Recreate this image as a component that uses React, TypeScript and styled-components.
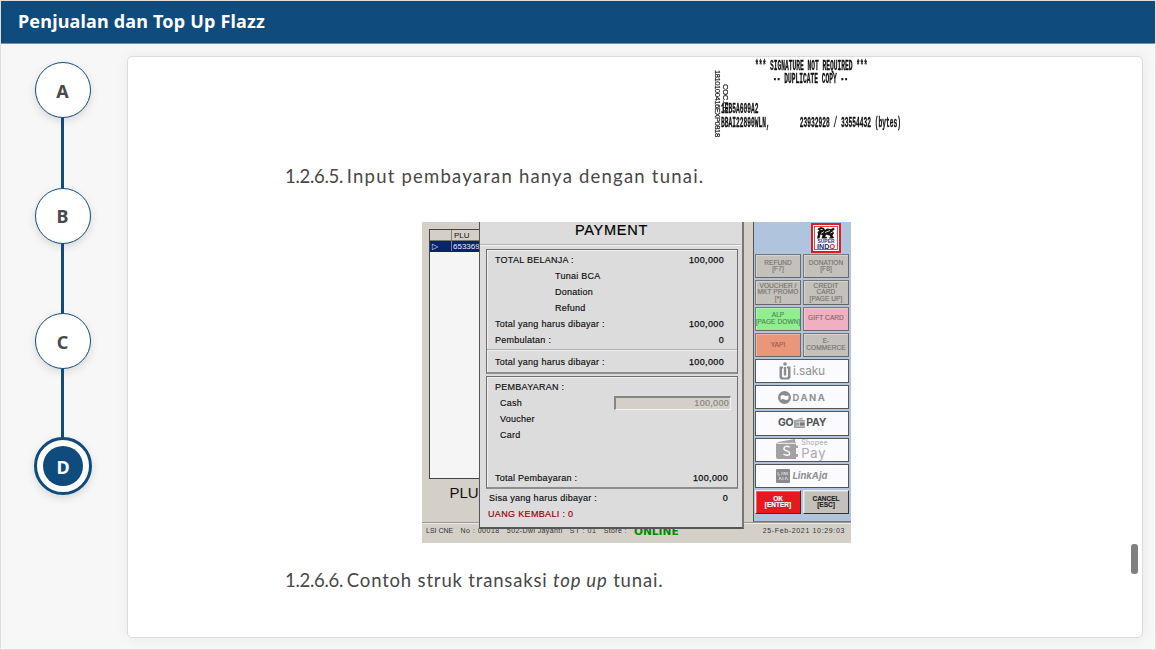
import React from "react";
import styled, { createGlobalStyle } from "styled-components";

const NAVY = "#104b7d";

const GlobalStyle = createGlobalStyle`
  * { box-sizing: border-box; }
  body { margin: 0; background: #f7f7f7; font-family: "Open Sans", "Noto Sans", sans-serif; }
`;

const Page = styled.div`
  width: 1156px;
  height: 650px;
  display: flex;
  flex-direction: column;
  overflow: hidden;
  background: #f7f7f7;
  border: 1px solid #dedede;
`;

const Header = styled.header`
  height: 43px;
  flex: none;
  padding: 0 17px 2px;
  display: flex;
  align-items: center;
  background: ${NAVY};
  border-bottom: 1px solid #6e93b3;
`;

const Title = styled.h1`
  margin: 0;
  color: #fff;
  font: 700 18px/24px "Noto Sans", "Open Sans", sans-serif;
  letter-spacing: 0.18px;
  white-space: nowrap;
`;

const Main = styled.main`
  flex: 1;
  display: flex;
`;

const Steps = styled.nav`
  width: 126px;
  flex: none;
  padding: 18px 0 0 33px;
  display: flex;
  flex-direction: column;
`;

const StepItem = styled.div`
  width: 57px;
  display: flex;
  flex-direction: column;
  align-items: center;
`;

const StepCircle = styled.div<{ $active?: boolean }>`
  width: ${(p) => (p.$active ? 58 : 56)}px;
  height: ${(p) => (p.$active ? 58 : 56)}px;
  margin: ${(p) => (p.$active ? "-2px -1px 0 0" : "0")};
  flex: none;
  border-radius: 50%;
  display: flex;
  align-items: center;
  justify-content: center;
  border: ${(p) => (p.$active ? 3 : 1.5)}px solid ${NAVY};
  background: #fff;
  box-shadow: 0 3px 8px rgba(0, 0, 0, 0.13);
`;

const StepLetter = styled.span<{ $active?: boolean }>`
  width: ${(p) => (p.$active ? 40 : 41)}px;
  height: ${(p) => (p.$active ? 40 : 41)}px;
  border-radius: 50%;
  text-align: center;
  font: 700 18px/42px "Noto Sans", sans-serif;
  color: ${(p) => (p.$active ? "#fff" : "#4a4a4a")};
  background: ${(p) => (p.$active ? NAVY : "transparent")};
`;

const StepLine = styled.div`
  width: 3.6px;
  height: 69.5px;
  background: ${NAVY};
`;

const Card = styled.section`
  width: 1016px;
  height: 582px;
  margin-top: 12px;
  display: flex;
  border: 1px solid #dcdcdc;
  border-radius: 5px;
  background: #fff;
  box-shadow: 0 0 14px rgba(0, 0, 0, 0.06);
  overflow: hidden;
`;

const Article = styled.article`
  flex: 1;
  padding-left: 157px;
`;

const ScrollTrack = styled.div`
  width: 13px;
  padding-top: 487px;
`;

const ScrollThumb = styled.div`
  width: 7px;
  height: 30px;
  margin-left: 2px;
  border-radius: 3px;
  background: #808080;
`;

const Paragraph = styled.p<{ $top: number; $gap: number }>`
  margin: ${(p) => p.$top}px 0 0;
  font: 400 18.5px/28px Lato, "Open Sans", sans-serif;
  letter-spacing: ${(p) => p.$gap}px;
  color: #484848;
  white-space: nowrap;
`;

const Numbering = styled.span`
  letter-spacing: -0.3px;
  word-spacing: -0.6px;
`;

const Receipt = styled.div`
  position: relative;
  width: 190px;
  height: 84px;
  margin-left: 428px;
  padding-top: 3px;
  filter: blur(0.25px);
`;

const ReceiptLine = styled.div<{ $x: number; $h: number }>`
  height: ${(p) => p.$h}px;
  padding-left: ${(p) => p.$x}px;
  white-space: pre;
  font: 700 14px/13px "Liberation Mono", monospace;
  color: #111;
  -webkit-text-stroke: 0.3px #111;
  span { display: inline-block; transform: scaleX(0.4462); transform-origin: 0 50%; }
`;

const ReceiptSerial = styled.div<{ $x: number; $y: number; $gap: number }>`
  position: absolute;
  left: ${(p) => p.$x}px;
  top: ${(p) => p.$y}px;
  writing-mode: vertical-rl;
  font: 400 7.6px/9px "Liberation Sans", sans-serif;
  letter-spacing: ${(p) => p.$gap}px;
  color: #111;
  -webkit-text-stroke: 0.2px #111;
`;

const Pos = styled.div`
  position: relative;
  width: 429px;
  height: 321px;
  margin: 32px 0 0 137px;
  display: flex;
  flex-direction: column;
  background: #d4d0c8;
  font-family: "Liberation Sans", Arial, sans-serif;
  overflow: hidden;
`;

const PosBody = styled.div`
  height: 300px;
  display: flex;
  justify-content: space-between;
`;

const Sales = styled.div`
  width: 120px;
  padding: 7px 0 0 7px;
`;

const Table = styled.div`
  height: 250px;
  border: 1px solid #444;
  background: #f5f5f5;
`;

const TableRow = styled.div<{ $selected?: boolean }>`
  height: 11px;
  display: flex;
  font-size: 8px;
  line-height: 12px;
  background: ${(p) => (p.$selected ? "#0a246a" : "#d4d0c8")};
  color: ${(p) => (p.$selected ? "#e8ecf8" : "#111")};
  border-bottom: 1px solid ${(p) => (p.$selected ? "#0a246a" : "#777")};
`;

const TableCell = styled.div<{ $w: number; $pad?: number }>`
  width: ${(p) => p.$w}px;
  padding-left: ${(p) => p.$pad ?? 2}px;
  border-right: 1px solid #808080;
`;

const PluLabel = styled.div`
  padding: 5px 0 0 20.5px;
  font-size: 15px;
  line-height: 18px;
  color: #111;
`;

const Side = styled.aside`
  width: 98px;
  padding: 1px 2px 0 1px;
  background: #b0c4de;
  border-left: 1px solid #555;
  border-bottom: 1px solid #777;
`;

const LogoRow = styled.div`
  height: 31px;
  padding-left: 56px;
`;

const KeyGrid = styled.div`
  display: grid;
  grid-template-columns: 46px 46px;
  grid-auto-rows: 24.25px;
  gap: 2px;
`;

const Key = styled.div<{ $bg?: string; $fg?: string; $strong?: boolean }>`
  display: flex;
  flex-direction: column;
  align-items: center;
  justify-content: center;
  white-space: nowrap;
  border: 1px solid;
  border-color: ${(p) => (p.$strong ? "#eee #333 #333 #eee" : "#777 #6a6a6a #666 #777")};
  box-shadow: inset 1px 1px 0 rgba(255, 255, 255, 0.3);
  background: ${(p) => p.$bg ?? "#c3c1ba"};
  color: ${(p) => p.$fg ?? "#77756f"};
  font-size: 6.5px;
  font-weight: ${(p) => (p.$strong ? 700 : 400)};
  line-height: 6.5px;
  letter-spacing: ${(p) => (p.$strong ? 0 : 0.1)}px;
  -webkit-text-stroke: 0.15px currentColor;
`;

const Wallets = styled.div`
  display: flex;
  flex-direction: column;
  gap: 2px;
  padding: 2px 0;
`;

const Wallet = styled.div<{ $gap?: number }>`
  height: 24.2px;
  display: flex;
  align-items: center;
  justify-content: center;
  gap: ${(p) => p.$gap ?? 2}px;
  border: 1px solid #555;
  background: #fafaff;
  color: #909090;
`;

const Brand = styled.span<{ $size: number; $bold?: boolean; $italic?: boolean; $gap?: number; $color?: string }>`
  font-family: Inter, "Liberation Sans", sans-serif;
  font-size: ${(p) => p.$size}px;
  line-height: 1;
  font-weight: ${(p) => (p.$bold ? 700 : 400)};
  font-style: ${(p) => (p.$italic ? "italic" : "normal")};
  letter-spacing: ${(p) => p.$gap ?? 0}px;
  color: ${(p) => p.$color ?? "#929292"};
`;

const Stacked = styled.div`
  display: flex;
  flex-direction: column;
  gap: 1px;
`;

const Status = styled.footer`
  height: 21px;
  padding: 0 6px 0 4px;
  display: flex;
  align-items: flex-start;
  gap: 7.2px;
  border-top: 1px solid #9a9892;
  box-shadow: inset 0 1px 0 #eceae6;
  font-size: 7px;
  line-height: 15px;
  color: #333;
  white-space: nowrap;
`;

const StatusItem = styled.span<{ $gap?: number }>`
  letter-spacing: ${(p) => p.$gap ?? 0}px;
`;

const StatusClock = styled(StatusItem)`
  margin-left: auto;
`;

const Online = styled.span`
  font: 700 10.6px/16px "DejaVu Sans", sans-serif;
  color: #008a00;
`;

const Modal = styled.div`
  position: absolute;
  left: 57px;
  top: 0;
  width: 265px;
  height: 307px;
  padding: 0 4px 0 6px;
  display: flex;
  flex-direction: column;
  background: #dcdcdc;
  border: solid #555;
  border-width: 0 2px 2px 1px;
  border-right-color: #777;
`;

const ModalTitle = styled.div`
  height: 23px;
  margin: 0 -3px 4px -6px;
  border-bottom: 1px solid #b4b4b4;
  box-shadow: 0 1px 0 #f2f2f2;
  text-align: center;
  font-size: 14.5px;
  line-height: 17px;
  letter-spacing: 0.75px;
  text-indent: 2px;
  color: #000;
  -webkit-text-stroke: 0.2px #000;
`;

const Group = styled.div<{ $h: number; $after?: number }>`
  height: ${(p) => p.$h}px;
  margin-bottom: ${(p) => p.$after ?? 2}px;
  padding-top: 2px;
  border: 1px solid #6d6d6d;
  border-bottom: 2px solid #8d8d8d;
  box-shadow: inset 1px 1px 0 #f0f0f0;
`;

const Line = styled.div<{ $left?: number; $right?: number; $h?: number; $gap?: number; $color?: string }>`
  height: ${(p) => p.$h ?? 16}px;
  padding: 0 ${(p) => p.$right ?? 13}px 0 ${(p) => p.$left ?? 8}px;
  display: flex;
  align-items: center;
  justify-content: space-between;
  white-space: nowrap;
  font-size: 9px;
  letter-spacing: ${(p) => p.$gap ?? 0.26}px;
  color: ${(p) => p.$color ?? "#0c0c0c"};
  -webkit-text-stroke: 0.15px currentColor;
`;

const Amount = styled.span`
  font-size: 9px;
  letter-spacing: 0.35px;
  -webkit-text-stroke: 0.25px currentColor;
`;

const Rule = styled.div`
  height: 2px;
  margin-top: 1px;
  border-top: 1px solid #b0b0b0;
  border-bottom: 1px solid #f2f2f2;
`;

const CashField = styled.div`
  width: 117px;
  height: 14px;
  padding-right: 1px;
  text-align: right;
  font-size: 9px;
  line-height: 11px;
  letter-spacing: 0.3px;
  color: #85837d;
  background: #d4d0c8;
  border: solid;
  border-width: 2px 1px 1px 2px;
  border-color: #858585 #f2f2f2 #f2f2f2 #858585;
`;

const Spacer = styled.div`
  height: 27px;
`;

const SuperIndoLogo = () => (
  <svg width="30" height="30" viewBox="0 0 30 30">
    <rect width="30" height="30" fill="#e01b22" />
    <rect x="2" y="2" width="26" height="26" fill="#fff" />
    <rect x="3.5" y="3.5" width="23" height="23" fill="none" stroke="#e01b22" strokeWidth="0.8" />
    <path d="M7 5.500L10 4l3 1 1 2 2-1.500 4 .5 3-1.500 .5 2-2 1.500 1.500 2-1.500 2.500 1.500 2-1 1h-4l1.500-2.500-4-1.500-1.500 2 2.500 1-1 1h-5l1-3.500-2-.5-1 4H6l1-4.500-.5-2 2-1.500-2-1z" fill="#151515" />
    <path d="M9.500 6.500h2M14 9.500l5-2M10 10.500l3-2M19.500 10l2-1" stroke="#fff" strokeWidth="0.8" />
    <text x="6.500" y="19.700" textLength="17" lengthAdjust="spacingAndGlyphs" fontSize="4.500" fontWeight="700" fill="#1b2d80">SUPER</text>
    <text x="6" y="26" textLength="18" lengthAdjust="spacingAndGlyphs" fontSize="7.500" fontWeight="700" fill="#1b2d80">IND<tspan fill="#e01b22">O</tspan></text>
  </svg>
);

const ISakuIcon = () => (
  <svg width="12" height="18" viewBox="0 0 12 18">
    <circle cx="6" cy="2" r="1.8" fill="#8d8d8d" />
    <path d="M.5 4.500H4V6.500H3V14Q3 15.500 4.500 15.500H7.500Q9 15.500 9 14V6.500H8V4.500H11.500V14.500Q11.500 17.500 8.500 17.500H3.500Q.5 17.500 .5 14.500V4.500z" fill="#8d8d8d" />
    <rect x="4.800" y="5" width="2.400" height="8.500" fill="#8d8d8d" />
  </svg>
);

const DanaIcon = () => (
  <svg width="13" height="13" viewBox="0 0 13 13">
    <circle cx="6.500" cy="6.500" r="6.500" fill="#8c8c8c" />
    <path d="M2.600 5q2-1.500 3.900-.5t3.900-.3v3.800q-2 1.500-3.900.5T2.600 8.800z" fill="#fff" />
  </svg>
);

const GoIcon = () => (
  <svg width="11" height="13" viewBox="0 0 11 13">
    <path d="M0 3h11v8H0zM2 2.500L8 .5l1 2z" fill="#a0a0a0" />
    <path d="M1.500 5h4M1.500 9h4" stroke="#e5e5e5" strokeWidth="0.7" />
    <rect x="5.500" y="5" width="5.500" height="4" fill="#777" stroke="#e8e8e8" strokeWidth="0.700" />
  </svg>
);

const ShopeeIcon = () => (
  <svg width="23" height="21" viewBox="0 0 23 21">
    <path d="M2 3L19 0v3h1V20H2Q0 20 0 18V5z" fill="#a2a2a2" />
    <path d="M1 4.300h19" stroke="#fff" strokeWidth="0.900" />
    <path d="M20 6.500h2v2.500h-2zM20 15h2v3h-2z" fill="#a2a2a2" />
    <path d="M13.600 8.300C11.500 6.700 7.900 7 7.900 9.400c0 2.900 5.800 2 5.800 4.800 0 2.500-3.900 2.800-6.200.8" fill="none" stroke="#fff" strokeWidth="1.400" />
  </svg>
);

const LinkAjaIcon = () => (
  <svg width="14" height="14" viewBox="0 0 14 14">
    <rect width="14" height="14" rx="1" fill="#8b8b8b" />
    <path d="M2 3v3h2M6 3v3M8 6V3l2 3V3M12 3l-1 1.500L12 6M3 11l1-3 1.500 3M7 8v3M9 11l1-3 2 3" fill="none" stroke="#ddd" strokeWidth="0.800" />
  </svg>
);

const steps = ["A", "B", "C", "D"];

const keys = [
  { lines: ["REFUND", "[F7]"] },
  { lines: ["DONATION", "[F8]"] },
  { lines: ["VOUCHER /", "MKT PROMO", "[*]"] },
  { lines: ["CREDIT", "CARD", "[PAGE UP]"] },
  { lines: ["ALP", "[PAGE DOWN]"], bg: "#90ee90", fg: "#4f8d50" },
  { lines: ["GIFT CARD"], bg: "#efb0bf", fg: "#8d6570" },
  { lines: ["YAPI"], bg: "#e9967a", fg: "#9b5d49" },
  { lines: ["E-", "COMMERCE"] },
];

export default function App() {
  return (
    <>
      <GlobalStyle />
      <Page>
        <Header>
          <Title>Penjualan dan Top Up Flazz</Title>
        </Header>
        <Main>
          <Steps>
            {steps.map((s) => (
              <StepItem key={s}>
                <StepCircle $active={s === "D"}>
                  <StepLetter $active={s === "D"}>{s}</StepLetter>
                </StepCircle>
                {s !== "D" && <StepLine />}
              </StepItem>
            ))}
          </Steps>
          <Card>
            <Article>
              <Receipt>
                <ReceiptLine $x={42} $h={13}><span>*** SIGNATURE NOT REQUIRED ***</span></ReceiptLine>
                <ReceiptLine $x={60} $h={30}><span>-- DUPLICATE COPY --</span></ReceiptLine>
                <ReceiptLine $x={8} $h={14}><span>1EB5A609A2</span></ReceiptLine>
                <ReceiptLine $x={8} $h={14}><span>BBAI22890WLN,        23932928 / 33554432 (bytes)</span></ReceiptLine>
                <ReceiptSerial $x={0} $y={13} $gap={-0.45}>1810100416EXP0818</ReceiptSerial>
                <ReceiptSerial $x={8} $y={27} $gap={-0.3}>COC.EB</ReceiptSerial>
              </Receipt>
              <Paragraph $top={21} $gap={1.21}><Numbering>1.2.6.5. </Numbering>Input pembayaran hanya dengan tunai.</Paragraph>
              <Pos>
                <PosBody>
                  <Sales>
                    <Table>
                      <TableRow>
                        <TableCell $w={22} />
                        <TableCell $w={60}>PLU</TableCell>
                      </TableRow>
                      <TableRow $selected>
                        <TableCell $w={22}>▷</TableCell>
                        <TableCell $w={60} $pad={1}>653369</TableCell>
                      </TableRow>
                    </Table>
                    <PluLabel>PLU</PluLabel>
                  </Sales>
                  <Side>
                    <LogoRow><SuperIndoLogo /></LogoRow>
                    <KeyGrid>
                      {keys.map((k) => (
                        <Key key={k.lines[0]} $bg={k.bg} $fg={k.fg}>
                          {k.lines.map((l) => <span key={l}>{l}</span>)}
                        </Key>
                      ))}
                    </KeyGrid>
                    <Wallets>
                      <Wallet><ISakuIcon /><Brand $size={12} $gap={-0.2}>i.saku</Brand></Wallet>
                      <Wallet><DanaIcon /><Brand $size={9.5} $bold $gap={1.5}>DANA</Brand></Wallet>
                      <Wallet $gap={1}>
                        <Brand $size={10.5} $bold $gap={-0.3} $color="#555">GO</Brand>
                        <GoIcon />
                        <Brand $size={10.5} $bold $gap={-0.3} $color="#555">PAY</Brand>
                      </Wallet>
                      <Wallet>
                        <ShopeeIcon />
                        <Stacked>
                          <Brand $size={7} $gap={0.2} $color="#aaa">Shopee</Brand>
                          <Brand $size={13} $gap={0.8} $color="#aaa">Pay</Brand>
                        </Stacked>
                      </Wallet>
                      <Wallet><LinkAjaIcon /><Brand $size={9.5} $bold $italic>LinkAja</Brand></Wallet>
                    </Wallets>
                    <KeyGrid>
                      <Key $bg="#e8191c" $fg="#fff" $strong><span>OK</span><span>[ENTER]</span></Key>
                      <Key $fg="#222" $strong><span>CANCEL</span><span>[ESC]</span></Key>
                    </KeyGrid>
                  </Side>
                </PosBody>
                <Status>
                  <StatusItem>LSI CNE</StatusItem>
                  <StatusItem $gap={0.5}>No : 00018</StatusItem>
                  <StatusItem $gap={0.4}>502-Dwi Jayanti</StatusItem>
                  <StatusItem $gap={0.6}>ST : 01</StatusItem>
                  <StatusItem $gap={0.35}>Store :</StatusItem>
                  <Online>ONLINE</Online>
                  <StatusClock $gap={0.65}>25-Feb-2021 10:29:03</StatusClock>
                </Status>
                <Modal>
                  <ModalTitle>PAYMENT</ModalTitle>
                  <Group $h={125}>
                    <Line>TOTAL BELANJA :<Amount>100,000</Amount></Line>
                    <Line $left={68}>Tunai BCA</Line>
                    <Line $left={68}>Donation</Line>
                    <Line $left={68}>Refund</Line>
                    <Line>Total yang harus dibayar :<Amount>100,000</Amount></Line>
                    <Line>Pembulatan :<Amount>0</Amount></Line>
                    <Rule />
                    <Line $h={22}>Total yang harus dibayar :<Amount>100,000</Amount></Line>
                  </Group>
                  <Group $h={113} $after={1}>
                    <Line>PEMBAYARAN :</Line>
                    <Line $left={13} $right={6}>Cash<CashField>100,000</CashField></Line>
                    <Line $left={13}>Voucher</Line>
                    <Line $left={13}>Card</Line>
                    <Spacer />
                    <Line $right={9}>Total Pembayaran :<Amount>100,000</Amount></Line>
                  </Group>
                  <Line $left={3} $right={10}>Sisa yang harus dibayar :<Amount>0</Amount></Line>
                  <Line $left={2} $gap={0.34} $color="#8b0000">UANG KEMBALI : 0</Line>
                </Modal>
              </Pos>
              <Paragraph $top={23} $gap={0.82}><Numbering>1.2.6.6. </Numbering>Contoh struk transaksi <i>top up</i> tunai.</Paragraph>
            </Article>
            <ScrollTrack><ScrollThumb /></ScrollTrack>
          </Card>
        </Main>
      </Page>
    </>
  );
}
